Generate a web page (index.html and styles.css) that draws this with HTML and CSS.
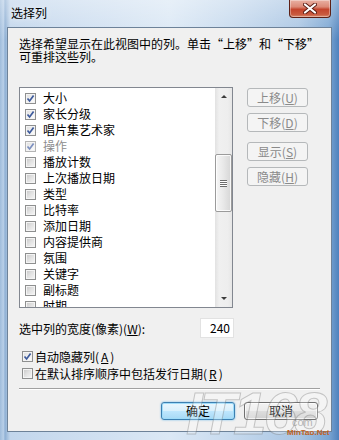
FILE: index.html
```html
<!DOCTYPE html>
<html lang="zh-CN">
<head>
<meta charset="utf-8">
<title>选择列</title>
<link rel="stylesheet" href="styles.css">
</head>
<body>
<div class="window">
  <div class="titlebar">
    <span class="title">选择列</span>
    <div class="close">
      <svg width="14" height="11" viewBox="0 0 14 11"><path d="M2 1.5 L12 9.5 M12 1.5 L2 9.5" stroke="#5b1d14" stroke-width="4" stroke-linecap="round"/><path d="M2 1.5 L12 9.5 M12 1.5 L2 9.5" stroke="#ffffff" stroke-width="2.2" stroke-linecap="round"/></svg>
    </div>
  </div>
  <div class="client">
    <p class="desc">选择希望显示在此视图中的列。单击“上移”和“下移”<br>可重排这些列。</p>
    <div class="main">
      <div class="listbox">
        <ul class="items">
          <li><span class="cb checked"><svg viewBox="0 0 9 9"><path d="M1.5 4.5 L3.6 7 L7.6 1.6" /></svg></span>大小</li>
          <li><span class="cb checked"><svg viewBox="0 0 9 9"><path d="M1.5 4.5 L3.6 7 L7.6 1.6" /></svg></span>家长分级</li>
          <li><span class="cb checked"><svg viewBox="0 0 9 9"><path d="M1.5 4.5 L3.6 7 L7.6 1.6" /></svg></span>唱片集艺术家</li>
          <li class="disabled"><span class="cb checked"><svg viewBox="0 0 9 9"><path d="M1.5 4.5 L3.6 7 L7.6 1.6" /></svg></span>操作</li>
          <li><span class="cb"></span>播放计数</li>
          <li><span class="cb"></span>上次播放日期</li>
          <li><span class="cb"></span>类型</li>
          <li><span class="cb"></span>比特率</li>
          <li><span class="cb"></span>添加日期</li>
          <li><span class="cb"></span>内容提供商</li>
          <li><span class="cb"></span>氛围</li>
          <li><span class="cb"></span>关键字</li>
          <li><span class="cb"></span>副标题</li>
          <li><span class="cb"></span>时期</li>
        </ul>
        <div class="scrollbar">
          <div class="sb-btn"><span class="arrow-up"></span></div>
          <div class="sb-track">
            <div class="sb-thumb"><span class="grip"></span></div>
          </div>
          <div class="sb-btn"><span class="arrow-down"></span></div>
        </div>
      </div>
      <div class="side-buttons">
        <div class="btn disabled">上移(<u>U</u>)</div>
        <div class="btn disabled">下移(<u>D</u>)</div>
        <div class="btn disabled gap-top">显示(<u>S</u>)</div>
        <div class="btn disabled">隐藏(<u>H</u>)</div>
      </div>
    </div>
    <div class="width-row">
      <span>选中列的宽度(像素)(<u>W</u>):</span>
      <div class="field">240</div>
    </div>
    <div class="opts">
      <div class="opt"><span class="cb checked"><svg viewBox="0 0 9 9"><path d="M1.5 4.5 L3.6 7 L7.6 1.6" /></svg></span>自动隐藏列(<u>A</u>)</div>
      <div class="opt"><span class="cb"></span>在默认排序顺序中包括发行日期(<u>R</u>)</div>
    </div>
    <div class="sep"></div>
    <div class="actions">
      <div class="btn default">确定</div>
      <div class="btn">取消</div>
    </div>
  </div>
  <div class="watermark">
    <span class="wm-big">IT168</span>
    <span class="wm-com">com</span>
    <span class="wm-net">MinTao.Net</span>
  </div>
</div>
</body>
</html>
```

FILE: styles.css
```css
body {
  margin: 0;
  background: #ffffff;
}

.window {
  position: relative;
  width: 339px;
  height: 440px;
  box-sizing: border-box;
  padding: 0 7px 8px 7px;
  display: flex;
  flex-direction: column;
  overflow: hidden;
  font-family: "Noto Sans CJK SC", "Liberation Sans", sans-serif;
  font-size: 12px;
  color: #000;
  background:
    linear-gradient(to bottom, rgba(255,255,255,0.35), rgba(255,255,255,0) 40px),
    linear-gradient(to right, #9fbcdb 0, #b8cfe8 1%, #8fb0d4 1.5%, #c2d6ec 3%, #d3e2f2 35%, #dbe8f5 50%, #c4d8ed 70%, #a9c5e3 88%, #7aa5d2 97%, #4f82bd 100%);
}

.titlebar {
  height: 27px;
  display: flex;
  justify-content: space-between;
  align-items: flex-start;
}

.title {
  margin: 5px 0 0 4px;
  line-height: 16px;
  font-size: 12px;
  color: #000;
  text-shadow: 0 0 6px rgba(255,255,255,0.9);
}

.close {
  width: 42px;
  height: 18px;
  box-sizing: border-box;
  margin-right: 1px;
  border: 1px solid #5d2016;
  border-top: none;
  border-radius: 0 0 4px 4px;
  background: linear-gradient(to bottom, #e9b0a2 0%, #dc8a77 40%, #c4442c 55%, #c95a3f 85%, #d98a6e 100%);
  box-shadow: inset 0 0 0 1px rgba(255,255,255,0.35);
  display: flex;
  align-items: center;
  justify-content: center;
}

.client {
  flex: 1;
  background: #f0f0f0;
  border: 1px solid #6d8299;
  padding: 9px 11px 0 11px;
  display: flex;
  flex-direction: column;
}

.desc {
  margin: 0;
  line-height: 13px;
  white-space: nowrap;
}

.main {
  margin-top: 24px;
  display: flex;
  gap: 14px;
}

.listbox {
  width: 214px;
  height: 221px;
  box-sizing: border-box;
  border: 1px solid #828790;
  background: #fff;
  display: flex;
}

.items {
  flex: 1;
  margin: 0;
  padding: 2px 0 0 5px;
  list-style: none;
  overflow: hidden;
}

.items li {
  height: 16px;
  display: flex;
  align-items: center;
  gap: 7px;
  line-height: 16px;
  white-space: nowrap;
}

.items li.disabled {
  color: #8d8d8d;
}

.cb {
  width: 11px;
  height: 11px;
  box-sizing: border-box;
  flex: none;
  border: 1px solid #8e8f8f;
  background: linear-gradient(135deg, #c6c6c6 0%, #e2e2e2 50%, #f7f7f7 100%);
  box-shadow: inset 0 0 0 1px #f4f4f4;
  display: flex;
  align-items: center;
  justify-content: center;
}

.cb.checked {
  background: linear-gradient(135deg, #dedede 0%, #f2f2f2 60%, #ffffff 100%);
}

.cb svg {
  width: 9px;
  height: 9px;
}

.cb svg path {
  fill: none;
  stroke: #3d5a9c;
  stroke-width: 1.7;
}

.disabled .cb {
  border-color: #b4b4b4;
}

.disabled .cb svg path {
  stroke: #7b8fbf;
}

.scrollbar {
  width: 17px;
  flex: none;
  display: flex;
  flex-direction: column;
  background: linear-gradient(to right, #e2e2e2 0%, #f0f0f0 25%, #eeeeee 75%, #e6e6e6 100%);
}

.sb-btn {
  height: 17px;
  display: flex;
  align-items: center;
  justify-content: center;
}

.arrow-up {
  width: 0;
  height: 0;
  border-left: 3px solid transparent;
  border-right: 3px solid transparent;
  border-bottom: 3px solid #3c3c3c;
}

.arrow-down {
  width: 0;
  height: 0;
  border-left: 3px solid transparent;
  border-right: 3px solid transparent;
  border-top: 3px solid #3c3c3c;
}

.sb-track {
  flex: 1;
}

.sb-thumb {
  margin-top: 49px;
  height: 58px;
  box-sizing: border-box;
  border: 1px solid #9b9b9b;
  border-radius: 2px;
  background: linear-gradient(to right, #f6f6f6 0%, #e8e8e8 50%, #d6d6d6 100%);
  box-shadow: inset 0 0 0 1px rgba(255,255,255,0.8);
  display: flex;
  align-items: center;
  justify-content: center;
}

.grip {
  width: 7px;
  height: 7px;
  background: repeating-linear-gradient(to bottom, #6c6c6c 0 1px, #ffffff 1px 2px);
}

.side-buttons {
  display: flex;
  flex-direction: column;
  gap: 6px;
  padding-top: 1px;
}

.btn {
  box-sizing: border-box;
  display: flex;
  align-items: center;
  justify-content: center;
  border: 1px solid #707070;
  border-radius: 3px;
  background: linear-gradient(to bottom, #f2f2f2 0%, #ebebeb 48%, #dddddd 52%, #cfcfcf 100%);
  box-shadow: inset 0 0 0 1px rgba(255,255,255,0.7);
  line-height: 14px;
  white-space: nowrap;
}

.side-buttons .btn {
  width: 61px;
  height: 19px;
}

.btn.disabled {
  border-color: #b5b8ba;
  background: #f4f4f4;
  box-shadow: none;
  color: #8a8a8a;
}

.btn.gap-top {
  margin-top: 4px;
}

.width-row {
  margin-top: 10px;
  width: 215px;
  height: 20px;
  display: flex;
  justify-content: space-between;
  align-items: center;
  white-space: nowrap;
}

.field {
  width: 34px;
  height: 20px;
  box-sizing: border-box;
  border: 1px solid #e2e2e2;
  background: #fff;
  text-align: right;
  padding-right: 3px;
  line-height: 18px;
}

.opts {
  margin-top: 10px;
  padding-left: 3px;
  display: flex;
  flex-direction: column;
}

.opt {
  height: 17px;
  display: flex;
  align-items: center;
  gap: 2px;
  white-space: nowrap;
}

.sep {
  margin-top: 6px;
  border-top: 1px solid #a0a0a0;
  border-bottom: 1px solid #ffffff;
}

.actions {
  margin-top: 12px;
  padding-right: 2px;
  display: flex;
  justify-content: flex-end;
  gap: 9px;
}

.actions .btn {
  width: 74px;
  height: 18px;
}

.btn.default {
  border-color: #3c7fb1;
  background: linear-gradient(to bottom, #eaf6fd 0%, #d9f0fc 48%, #bee6fd 52%, #a7d9f5 100%);
  box-shadow: inset 0 0 0 1px #9fdcf9, 0 0 2px #5fb4e6;
}

.watermark {
  position: absolute;
  left: 0;
  top: 0;
  width: 339px;
  height: 440px;
  pointer-events: none;
}

.wm-big {
  position: absolute;
  left: 186px;
  top: 384px;
  font-family: "Liberation Sans", sans-serif;
  font-style: italic;
  font-weight: bold;
  font-size: 60px;
  line-height: 60px;
  letter-spacing: -3px;
  color: rgba(255, 255, 255, 0.25);
  -webkit-text-stroke: 1px rgba(110, 110, 110, 0.35);
}

.wm-com {
  position: absolute;
  left: 292px;
  top: 417px;
  font-family: "Liberation Sans", sans-serif;
  font-size: 11px;
  line-height: 11px;
  color: rgba(120, 120, 120, 0.5);
}

.wm-net {
  position: absolute;
  left: 287px;
  top: 429px;
  font-family: "Liberation Sans", sans-serif;
  font-weight: bold;
  font-size: 8px;
  line-height: 8px;
  color: #c2621e;
}
```
